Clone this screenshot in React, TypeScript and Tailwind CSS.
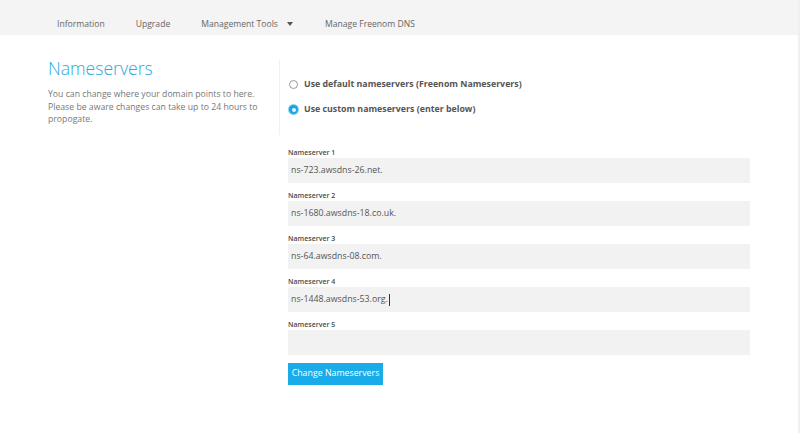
const nameservers = [
  'ns-723.awsdns-26.net.',
  'ns-1680.awsdns-18.co.uk.',
  'ns-64.awsdns-08.com.',
  'ns-1448.awsdns-53.org.',
  '',
];

const Radio = ({ checked }: { checked: boolean }) =>
  checked ? (
    <span className="mt-[3px] flex h-[9px] w-[9px] shrink-0 items-center justify-center rounded-full bg-[#1ba5e6] ring-1 ring-[#8fd0f0]">
      <span className="h-[4px] w-[4px] rounded-full bg-[#e9f6fd]" />
    </span>
  ) : (
    <span className="mt-[3px] h-[9px] w-[9px] shrink-0 rounded-full border border-[#999] bg-white" />
  );

export default function App() {
  return (
    <div className="min-h-[433px] border-r-2 border-[#f0f0f0] bg-white font-['Open_Sans',sans-serif] text-[#555]">
      {/* top nav */}
      <nav className="flex h-[35px] items-start bg-[#f4f4f4] pt-[17px] pl-[57px] text-[8.6px] leading-[14px] text-[#666]">
        <span>Information</span>
        <span className="ml-[31px]">Upgrade</span>
        <span className="ml-[31px] flex items-center">
          Management Tools
          <svg className="ml-[9px]" width="6" height="4" viewBox="0 0 6 4">
            <path d="M0 0h6L3 4z" fill="#555" />
          </svg>
        </span>
        <span className="ml-[32px]">Manage Freenom DNS</span>
      </nav>

      <div className="flex pt-[21px]">
        {/* left column */}
        <div className="w-[279px] shrink-0 pr-[8px] pl-[48px]">
          <h1 className="text-[17.6px] leading-[24px] font-light text-[#27a9e1]">Nameservers</h1>
          <p className="mt-[8px] text-[8.7px] leading-[12.6px] text-[#777]">
            You can change where your domain points to here. Please be aware changes can take up to 24 hours to
            propogate.
          </p>
        </div>

        {/* right column */}
        <div className="flex-1">
          <div className="mt-[4px] flex h-[75px] flex-col gap-[11px] border-l border-[#f0f0f0] pt-[17px] pl-[9px] text-[8.8px] leading-[14px] font-bold text-[#555]">
            <label className="flex gap-[6px]">
              <Radio checked={false} />
              <span>Use default nameservers (Freenom Nameservers)</span>
            </label>
            <label className="flex gap-[6px]">
              <Radio checked={true} />
              <span>Use custom nameservers (enter below)</span>
            </label>
          </div>

          <div className="mt-[13px] pl-[9px]">
            {nameservers.map((ns, i) => (
              <div key={i} className="mb-[8px]">
                <div className="h-[10px] text-[7px] leading-[10px] font-semibold text-[#4a4a4a]">Nameserver {i + 1}</div>
                <div className="flex h-[25px] w-[462px] items-center bg-[#f2f2f2] px-[3px] text-[8.8px] text-[#555]">
                  {ns}
                  {i === 3 && <span className="ml-px h-[12px] w-px bg-[#333]" />}
                </div>
              </div>
            ))}
            <button className="mt-[1px] block h-[22px] w-[95px] bg-[#1aabe9] text-[8.8px] whitespace-nowrap text-white">
              Change Nameservers
            </button>
          </div>
        </div>
      </div>
    </div>
  );
}
